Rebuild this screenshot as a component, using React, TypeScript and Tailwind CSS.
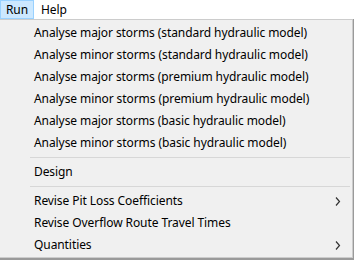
import React from "react";

const groups: { label: string; sub?: boolean }[][] = [
  [
    { label: "Analyse major storms (standard hydraulic model)" },
    { label: "Analyse minor storms (standard hydraulic model)" },
    { label: "Analyse major storms (premium hydraulic model)" },
    { label: "Analyse minor storms (premium hydraulic model)" },
    { label: "Analyse major storms (basic hydraulic model)" },
    { label: "Analyse minor storms (basic hydraulic model)" },
  ],
  [{ label: "Design" }],
  [
    { label: "Revise Pit Loss Coefficients", sub: true },
    { label: "Revise Overflow Route Travel Times" },
    { label: "Quantities", sub: true },
  ],
];

function Chevron() {
  return (
    <svg width="6" height="9" viewBox="0 0 6 9" className="absolute right-[11px] top-[7px]">
      <path d="M1 0.5 L4.5 4.5 L1 8.5" fill="none" stroke="#333" strokeWidth="1.2" />
    </svg>
  );
}

export default function App() {
  return (
    <div
      className="w-[354px] h-[260px] overflow-hidden bg-[#9a9a9a] text-[12px] text-black tracking-[-0.08px]"
      style={{ fontFamily: '"Segoe UI", "Noto Sans", "Open Sans", sans-serif' }}
    >
      <div className="h-[19px] bg-white flex items-stretch">
        <div className="w-[34px] bg-[#cce8ff] border border-[#99d1ff] flex items-center justify-center leading-none">
          Run
        </div>
        <div className="pl-[7px] flex items-center leading-none">Help</div>
      </div>
      <div className="w-[353px] h-[239px] bg-[#f0f0f0] border-t border-r border-b border-[#cccccc] pt-[2px] pb-[1px]">
        {groups.map((g, gi) => (
          <React.Fragment key={gi}>
            {gi > 0 && (
              <div className="py-[3px] pl-[30px] pr-[2px]">
                <div className="h-px bg-[#d7d7d7]" />
              </div>
            )}
            {g.map((it) => (
              <div key={it.label} className="relative h-[22px] pl-[34px] flex items-center leading-none">
                {it.label}
                {it.sub && <Chevron />}
              </div>
            ))}
          </React.Fragment>
        ))}
      </div>
    </div>
  );
}
